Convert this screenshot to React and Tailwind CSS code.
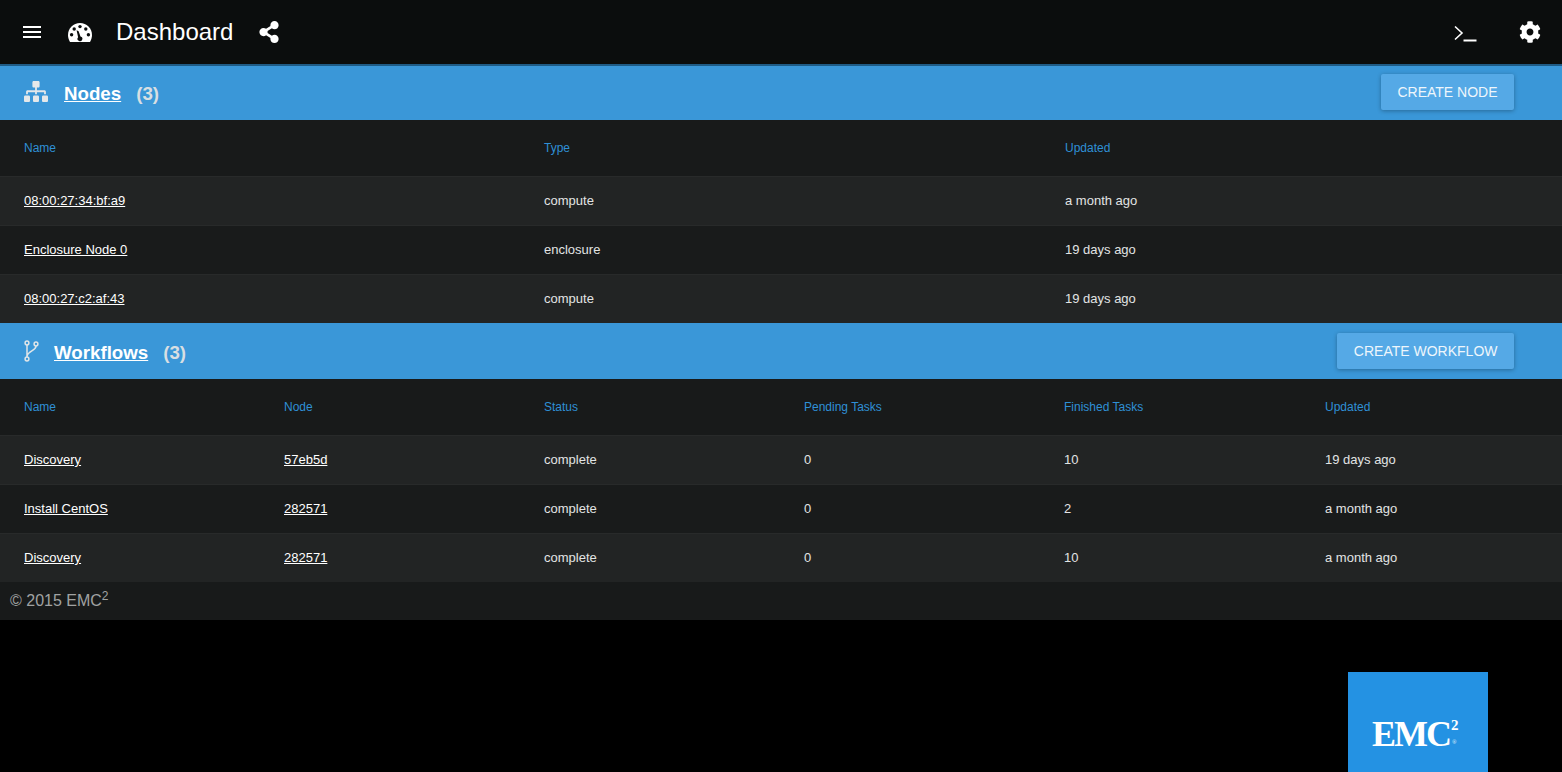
import React from 'react';
import { FaShareAlt, FaCog, FaSitemap } from 'react-icons/fa';

const nodes = [
  ['08:00:27:34:bf:a9', 'compute', 'a month ago'],
  ['Enclosure Node 0', 'enclosure', '19 days ago'],
  ['08:00:27:c2:af:43', 'compute', '19 days ago'],
];

const workflows = [
  ['Discovery', '57eb5d', 'complete', '0', '10', '19 days ago'],
  ['Install CentOS', '282571', 'complete', '0', '2', 'a month ago'],
  ['Discovery', '282571', 'complete', '0', '10', 'a month ago'],
];

const SectionBar = ({ icon, title, count, action, gap }) => (
  <div className="h-14 bg-[#3a97d8] flex items-center pl-6 pr-12">
    {icon}
    <a href="#" className={`${gap} mt-1 text-[18.72px] font-bold text-white underline`}>{title}</a>
    <span className="ml-[15px] mt-1 text-[18.72px] font-bold text-[#d8dfe3]">({count})</span>
    <button className="ml-auto h-9 px-[16.5px] rounded-[2px] bg-[#55a9e6] text-sm text-[#eef6fc] shadow-[0_1px_4px_rgba(0,0,0,0.3)]">
      {action}
    </button>
  </div>
);

const DataTable = ({ cols, headers, rows, links }) => (
  <div>
    <div className={`${cols} h-14 items-center bg-[#181a1a] text-xs text-[#2f90d6]`}>
      {headers.map((h) => (
        <div key={h} className="pl-6">{h}</div>
      ))}
    </div>
    {rows.map((row, i) => (
      <div
        key={i}
        className={`${cols} h-[49px] items-center border-t border-[#282a2a] text-[13px] text-[#e2e4e4] ${
          i % 2 === 0 ? 'bg-[#222424]' : 'bg-[#191b1b]'
        }`}
      >
        {row.map((cell, j) => (
          <div key={j} className="pl-6">
            {j < links ? <a href="#" className="text-white underline">{cell}</a> : cell}
          </div>
        ))}
      </div>
    ))}
  </div>
);

export default function App() {
  return (
    <div className="min-h-[772px] bg-black font-['Liberation_Sans',Arial,sans-serif] overflow-hidden">
      {/* Top bar, the blue line sits on top of the first section */}
      <header className="relative z-10 h-16 bg-[#0b0d0d] shadow-[0_2px_0_#1f5b85] flex items-center text-white pl-[23px] pr-[21px]">
        <svg className="w-[18px] h-[14px]" viewBox="0 0 18 14" fill="#fff">
          <rect y="1" width="18" height="2" />
          <rect y="6" width="18" height="2" />
          <rect y="11" width="18" height="2" />
        </svg>
        <svg className="ml-[27px] w-6 h-[19px] mt-[1px]" viewBox="0 0 24 19">
          <path fill="#fff" d="M12 0C5.4 0 0 5.3 0 12c0 2.5.7 4.8 2 7h20c1.3-2.2 2-4.5 2-7C24 5.3 18.6 0 12 0z" />
          <g fill="#0b0d0d">
            <circle cx="12" cy="3.6" r="1.7" />
            <circle cx="6.2" cy="6" r="1.7" />
            <circle cx="17.8" cy="6" r="1.7" />
            <circle cx="3.6" cy="11.8" r="1.7" />
            <circle cx="20.4" cy="11.8" r="1.7" />
            <path d="M8.6 7.2l2 1 1.9 5.2a2.4 2.4 0 1 1-2.4.8z" />
          </g>
        </svg>
        <h1 className="ml-6 text-2xl font-normal">Dashboard</h1>
        <FaShareAlt className="ml-[25px] w-[22px] h-[22px]" />
        <svg className="ml-auto w-6 h-5 mt-[3px]" viewBox="0 0 24 20" fill="none" stroke="#fff">
          <path d="M1 2.5l7 6.5-7 6.5" strokeWidth="1.6" />
          <path d="M9.5 16.5h13" strokeWidth="2" />
        </svg>
        <FaCog className="ml-[41px] w-[22px] h-[22px]" />
      </header>

      <SectionBar
        icon={<FaSitemap preserveAspectRatio="none" className="w-6 h-[21px] -mt-[1px] text-[#e4e8ea]" />}
        gap="ml-4"
        title="Nodes"
        count={3}
        action="CREATE NODE"
      />
      <DataTable cols="grid grid-cols-[520px_521px_1fr]" headers={['Name', 'Type', 'Updated']} rows={nodes} links={1} />

      <SectionBar
        icon={
          <svg className="w-[15px] h-[22px] -mt-[1px]" viewBox="0 0 15 22" fill="none" stroke="#dfe5e8" strokeWidth="1.5">
            <circle cx="3" cy="3" r="1.9" />
            <circle cx="3" cy="19" r="1.9" />
            <circle cx="12" cy="4" r="1.9" />
            <path d="M3 5v12M12 6c0 5-7 4-9 10" />
          </svg>
        }
        gap="ml-[15px]"
        title="Workflows"
        count={3}
        action="CREATE WORKFLOW"
      />
      <DataTable
        cols="grid grid-cols-[260px_260px_260px_260px_261px_1fr]"
        headers={['Name', 'Node', 'Status', 'Pending Tasks', 'Finished Tasks', 'Updated']}
        rows={workflows}
        links={2}
      />

      <footer className="h-[38px] bg-[#181a1a] flex items-center pl-2.5 text-base text-[#a0a2a2]">
        <span>© 2015 EMC<sup className="text-[12px]">2</sup></span>
      </footer>

      <div className="flex justify-end pr-[74px] pt-[52px]">
        <div className="w-[140px] h-[100px] bg-[#2492e3] flex items-start pl-6 pt-[44px]">
          <span className="relative font-['Liberation_Serif',serif] font-bold text-[36px] leading-none tracking-[-2px] text-white">
            EMC<sup className="text-[15px] align-[9px] ml-[1px] tracking-normal">2</sup>
            <span className="absolute right-[2px] bottom-[7px] text-[6px] leading-none tracking-normal text-[#cfe6f8]">®</span>
          </span>
        </div>
      </div>
    </div>
  );
}
